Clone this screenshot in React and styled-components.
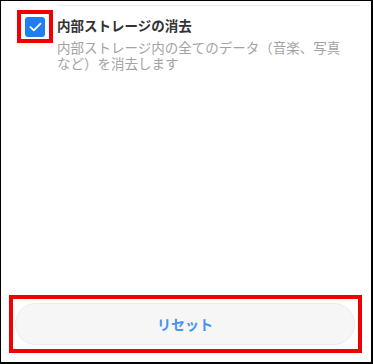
import React from "react";
import styled, { createGlobalStyle } from "styled-components";

const GlobalStyle = createGlobalStyle`
  html, body {
    margin: 0;
    padding: 0;
    background: #fff;
  }
  body {
    font-family: "Noto Sans CJK JP", "Noto Sans", sans-serif;
  }
`;

const Frame = styled.div`
  box-sizing: border-box;
  width: 373px;
  height: 364px;
  border-style: solid;
  border-color: #000;
  border-width: 1px 2px 2px 1px;
  background: #fff;
  display: flex;
  flex-direction: column;
  justify-content: space-between;
  padding: 0 9px 9px 8px;
`;

const Divider = styled.div`
  height: 1px;
  background: #eeeeee;
  margin: 4px 2px 0 48px;
`;

const OptionRow = styled.div`
  display: flex;
  align-items: flex-start;
  gap: 4px;
  padding: 4px 0 0 8px;
`;

const Highlight = styled.div`
  box-sizing: border-box;
  border: 4px solid #f00000;
  display: flex;
  align-items: center;
  justify-content: center;
  width: ${({ w }) => w || "auto"};
  height: ${({ h }) => h || "auto"};
  padding: ${({ pad }) => pad || "0"};
`;

const Checkbox = styled.span`
  width: 20px;
  height: 20px;
  border-radius: 3px;
  background: #1f7ff0;
  display: flex;
  align-items: center;
  justify-content: center;
`;

const TextCol = styled.div`
  display: flex;
  flex-direction: column;
  padding-top: 6px;
`;

const Title = styled.div`
  font-size: 13.5px;
  line-height: 18px;
  font-weight: 700;
  color: #333;
`;

const Desc = styled.div`
  width: 290px;
  font-size: 13.5px;
  line-height: 15.5px;
  color: #a3a3a3;
  margin-top: 6px;
`;

const ResetButton = styled.button`
  box-sizing: border-box;
  width: 100%;
  height: 42px;
  border-radius: 21px;
  border: 1px solid #ececec;
  background: #f6f6f6;
  color: #4592f2;
  font-family: "Noto Sans CJK JP", "Noto Sans", sans-serif;
  font-size: 14px;
  font-weight: 700;
  cursor: pointer;
`;

export default function App() {
  return (
    <>
      <GlobalStyle />
      <Frame>
        <div>
          <Divider />
          <OptionRow>
            <Highlight w="36px" h="33px">
              <Checkbox>
                <svg width="13" height="10" viewBox="0 0 13 10">
                  <path
                    d="M1.5 5.2 L4.8 8.3 L11.5 1.7"
                    fill="none"
                    stroke="#fff"
                    strokeWidth="1.8"
                    strokeLinecap="round"
                    strokeLinejoin="round"
                  />
                </svg>
              </Checkbox>
            </Highlight>
            <TextCol>
              <Title>内部ストレージの消去</Title>
              <Desc>内部ストレージ内の全てのデータ（音楽、写真など）を消去します</Desc>
            </TextCol>
          </OptionRow>
        </div>
        <Highlight pad="4px 3px 4px 2px">
          <ResetButton>リセット</ResetButton>
        </Highlight>
      </Frame>
    </>
  );
}
